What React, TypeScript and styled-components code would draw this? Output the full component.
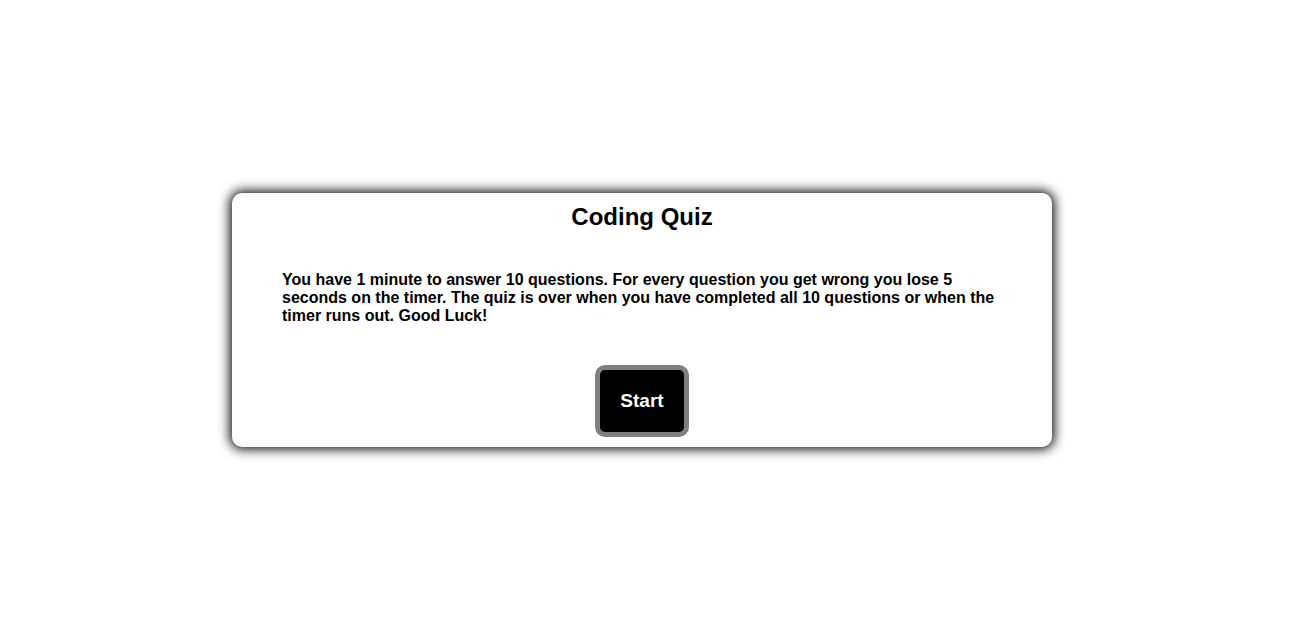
import React from 'react';
import styled, { createGlobalStyle } from 'styled-components';

const GlobalStyle = createGlobalStyle`
  *, *::before, *::after {
    box-sizing: border-box;
    margin: 0;
    padding: 0;
  }

  body {
    background: #fff;
    color: #000;
    font-family: Arial, "Liberation Sans", sans-serif;
    font-size: 16px;
  }
`;

const Page = styled.main`
  display: flex;
  align-items: center;
  justify-content: center;
  min-height: 100vh;
  padding: 16px 13px 0 0;
`;

const Card = styled.section`
  display: flex;
  flex-direction: column;
  align-items: center;
  width: 100%;
  max-width: 820px;
  padding: 10px;
  border-radius: 10px;
  background: #fff;
  box-shadow: 0 0 12px 2px #000;
`;

const Title = styled.h1`
  font-size: 24px;
  line-height: 28px;
`;

const Instructions = styled.p`
  padding: 40px;
  font-weight: bold;
  line-height: 18px;
`;

const StartButton = styled.button`
  padding: 20px;
  border: 5px solid gray;
  border-radius: 10px;
  background: #000;
  color: #fff;
  font-family: inherit;
  font-size: 19px;
  font-weight: bold;
  line-height: 22px;
  cursor: pointer;
`;

export default function App() {
  return (
    <>
      <GlobalStyle />
      <Page>
        <Card>
          <Title>Coding Quiz</Title>
          <Instructions>
            You have 1 minute to answer 10 questions. For every question you get wrong you lose 5
            seconds on the timer. The quiz is over when you have completed all 10 questions or when
            the timer runs out. Good Luck!
          </Instructions>
          <StartButton type="button">Start</StartButton>
        </Card>
      </Page>
    </>
  );
}
